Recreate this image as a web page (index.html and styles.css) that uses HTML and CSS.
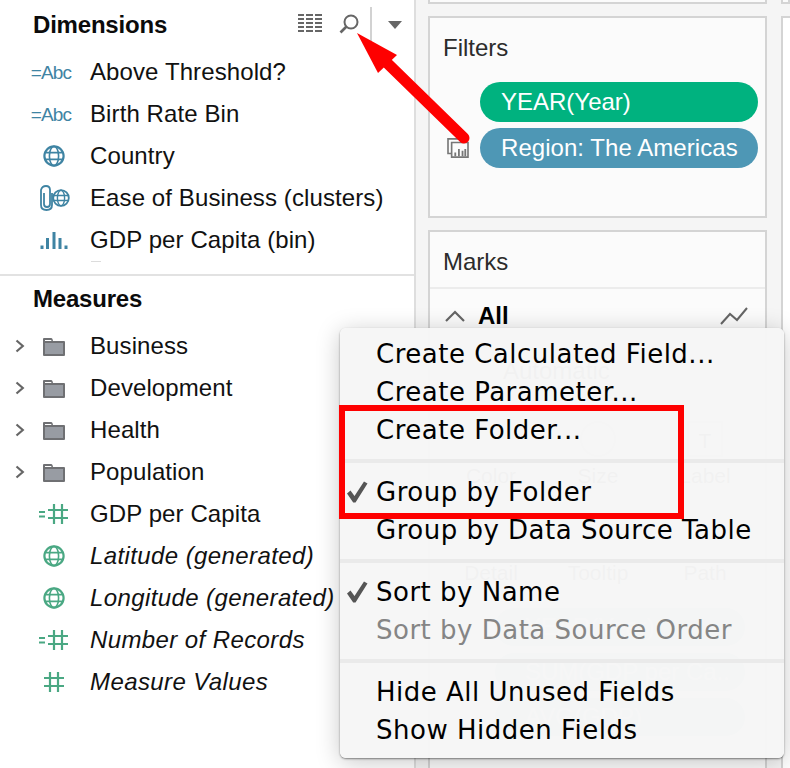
FILE: index.html
```html
<!DOCTYPE html>
<html lang="en">
<head>
<meta charset="utf-8">
<title>Data pane menu</title>
<link rel="stylesheet" href="styles.css">
</head>
<body>
<svg class="defs" width="0" height="0" aria-hidden="true">
  <defs>
    <symbol id="globe" viewBox="0 0 22 22">
      <g fill="none" stroke="currentColor">
        <circle cx="11" cy="11" r="9.6" stroke-width="2.2"/>
        <ellipse cx="11" cy="11" rx="4.6" ry="9.6" stroke-width="1.6"/>
        <path d="M1.6 7.6h18.8M1.6 14.4h18.8" stroke-width="1.6"/>
      </g>
    </symbol>
    <symbol id="hash" viewBox="0 0 20 20">
      <path d="M6 0v20M14 0v20M0 6h20M0 14h20" fill="none" stroke="currentColor" stroke-width="2.2"/>
    </symbol>
    <symbol id="eqhash" viewBox="0 0 29 20">
      <path d="M0 8h6M0 12.500h6" fill="none" stroke="currentColor" stroke-width="2"/>
      <path d="M15 0v20M23 0v20M9 6h20M9 14h20" fill="none" stroke="currentColor" stroke-width="2.200"/>
    </symbol>
    <symbol id="folder" viewBox="0 0 22 19">
      <path d="M1 19q-1 0-1-1V2q0-1 1-1h7q1 0 1.500 1L10 4h11q1 0 1 1v13q0 1-1 1z" fill="#6f7073"/>
      <path d="M2 6h18v11H2z" fill="#989ca3"/>
      <path d="M2 3h6l.6 1H2z" fill="#fff"/>
    </symbol>
    <symbol id="chev" viewBox="0 0 10 14">
      <path d="M1.500 1.500 7.800 7 1.500 12.500" fill="none" stroke="#666" stroke-width="2.200"/>
    </symbol>
    <symbol id="check" viewBox="0 0 22 22">
      <path d="M1 12.500 4.500 9.500 8.500 15 18 0.500 21.500 2.500 9.500 21.500H7.200z" fill="#555"/>
    </symbol>
  </defs>
</svg>

<div class="app">
  <aside class="data-pane">
    <section class="dims">
      <header class="pane-head">
        <h2 class="pane-title">Dimensions</h2>
        <div class="tools">
          <svg class="tool-list" width="24" height="18" viewBox="0 0 24 18" aria-hidden="true">
            <path d="M0 1h6M8 1h7M17 1h7M0 5h6M8 5h7M17 5h7M0 9h6M8 9h7M17 9h7M0 13h6M8 13h7M17 13h7M0 17h6M8 17h7M17 17h7" fill="none" stroke="#666" stroke-width="1.800"/>
          </svg>
          <svg class="tool-search" width="20" height="20" viewBox="0 0 20 20" aria-hidden="true">
            <circle cx="12" cy="8" r="6.500" fill="none" stroke="#666" stroke-width="2"/>
            <path d="M7.500 12.500 1.500 18.500" fill="none" stroke="#666" stroke-width="2.600"/>
          </svg>
          <span class="tool-sep"></span>
          <span class="tool-caret"></span>
        </div>
      </header>
      <ul class="fields">
        <li class="field"><span class="chev-slot"></span><span class="ico blue"><span class="abc">=Abc</span></span><span class="name">Above Threshold?</span></li>
        <li class="field"><span class="chev-slot"></span><span class="ico blue"><span class="abc">=Abc</span></span><span class="name">Birth Rate Bin</span></li>
        <li class="field"><span class="chev-slot"></span><span class="ico blue"><svg class="i22"><use href="#globe"/></svg></span><span class="name">Country</span></li>
        <li class="field"><span class="chev-slot"></span><span class="ico blue">
          <svg class="clip" width="31" height="26" viewBox="0 0 31 26" aria-hidden="true">
            <path d="M5 8v11q0 3 3 3t3-3V5q0-4-4-4T2 5v15q0 5 5.500 5T13 20V8" fill="none" stroke="currentColor" stroke-width="1.800"/>
            <g fill="none" stroke="currentColor">
              <circle cx="22" cy="13" r="7.800" stroke-width="1.800"/>
              <ellipse cx="22" cy="13" rx="3.600" ry="7.800" stroke-width="1.400"/>
              <path d="M14.500 10.500h15M14.500 15.500h15" stroke-width="1.400"/>
            </g>
          </svg></span><span class="name">Ease of Business (clusters)</span></li>
        <li class="field"><span class="chev-slot"></span><span class="ico blue">
          <svg width="28" height="17" viewBox="0 0 28 17" aria-hidden="true">
            <path d="M2 13.500v3.500M7.500 6v11M14 0v17M20 6v11M26 13.500v3.500" fill="none" stroke="currentColor" stroke-width="3"/>
          </svg></span><span class="name">GDP per Capita (bin)</span></li>
        <li class="field-cut"><span class="sliver"></span></li>
      </ul>
    </section>
    <section class="meas">
      <h2 class="pane-title meas-title">Measures</h2>
      <ul class="fields">
        <li class="field"><span class="chev-slot"><svg class="chev"><use href="#chev"/></svg></span><span class="ico"><svg class="fold"><use href="#folder"/></svg></span><span class="name">Business</span></li>
        <li class="field"><span class="chev-slot"><svg class="chev"><use href="#chev"/></svg></span><span class="ico"><svg class="fold"><use href="#folder"/></svg></span><span class="name">Development</span></li>
        <li class="field"><span class="chev-slot"><svg class="chev"><use href="#chev"/></svg></span><span class="ico"><svg class="fold"><use href="#folder"/></svg></span><span class="name">Health</span></li>
        <li class="field"><span class="chev-slot"><svg class="chev"><use href="#chev"/></svg></span><span class="ico"><svg class="fold"><use href="#folder"/></svg></span><span class="name">Population</span></li>
        <li class="field"><span class="chev-slot"></span><span class="ico green"><svg class="i-eq"><use href="#eqhash"/></svg></span><span class="name">GDP per Capita</span></li>
        <li class="field"><span class="chev-slot"></span><span class="ico green"><svg class="i22"><use href="#globe"/></svg></span><span class="name em">Latitude (generated)</span></li>
        <li class="field"><span class="chev-slot"></span><span class="ico green"><svg class="i22"><use href="#globe"/></svg></span><span class="name em">Longitude (generated)</span></li>
        <li class="field"><span class="chev-slot"></span><span class="ico green"><svg class="i-eq"><use href="#eqhash"/></svg></span><span class="name em">Number of Records</span></li>
        <li class="field"><span class="chev-slot"></span><span class="ico green"><svg class="i-hash"><use href="#hash"/></svg></span><span class="name em">Measure Values</span></li>
      </ul>
    </section>
  </aside>

  <main class="shelves">
    <div class="card stub"></div>
    <section class="card filters">
      <h3 class="card-title">Filters</h3>
      <div class="pills">
        <div class="pill-row"><span class="pill pill-green">YEAR(Year)</span></div>
        <div class="pill-row">
          <svg class="ctx" width="24" height="22" viewBox="0 0 24 22" aria-hidden="true">
            <path d="M5 17H1V1h15v3" fill="none" stroke="#777" stroke-width="1.800"/>
            <path d="M5 5h18v16H5z" fill="none" stroke="#777" stroke-width="1.800"/>
            <path d="M9 20v-4M13 20v-8M17 20v-6M20 20v-8" fill="none" stroke="#777" stroke-width="2"/>
          </svg>
          <span class="pill pill-blue">Region: The Americas</span>
        </div>
      </div>
    </section>
    <section class="card marks">
      <h3 class="card-title marks-title">Marks</h3>
      <div class="marks-all">
        <svg width="20" height="12" viewBox="0 0 20 12" aria-hidden="true"><path d="M1 11 10 2l9 9" fill="none" stroke="#666" stroke-width="2.200"/></svg>
        <strong class="all-label">All</strong>
        <svg class="all-line" width="28" height="18" viewBox="0 0 28 18" aria-hidden="true"><path d="M1 17 10 7l7 6L27 1" fill="none" stroke="#666" stroke-width="2"/></svg>
      </div>
      <div class="mark-type"><span class="mark-type-name">Automatic</span></div>
      <div class="mark-grid">
        <div class="mark-cell"><span class="mark-glyph"></span>Color</div>
        <div class="mark-cell"><span class="mark-glyph round"></span>Size</div>
        <div class="mark-cell"><span class="mark-glyph box">T</span>Label</div>
        <div class="mark-cell"><span class="mark-glyph"></span>Detail</div>
        <div class="mark-cell"><span class="mark-glyph"></span>Tooltip</div>
        <div class="mark-cell"><span class="mark-glyph"></span>Path</div>
      </div>
      <div class="mark-pills">
        <span class="mark-pill">YEAR(Year)</span>
        <span class="mark-pill">SUM(GDP per Ca..</span>
        <span class="mark-pill">AVG(GDP)</span>
      </div>
    </section>
  </main>

  <div class="canvas">
    <div class="card stub"></div>
    <div class="card canvas-card"></div>
  </div>
</div>

<div class="menu" role="menu">
  <div class="item">Create Calculated Field...</div>
  <div class="item">Create Parameter...</div>
  <div class="item">Create Folder...</div>
  <div class="sep"></div>
  <div class="item"><svg class="tick"><use href="#check"/></svg>Group by Folder</div>
  <div class="item">Group by Data Source Table</div>
  <div class="sep"></div>
  <div class="item"><svg class="tick"><use href="#check"/></svg>Sort by Name</div>
  <div class="item off">Sort by Data Source Order</div>
  <div class="sep"></div>
  <div class="item">Hide All Unused Fields</div>
  <div class="item">Show Hidden Fields</div>
</div>

<div class="callout-box"></div>
<svg class="callout-arrow" width="790" height="768" viewBox="0 0 790 768" aria-hidden="true">
  <path d="M383 59 464 138" fill="none" stroke="#fe0000" stroke-width="11" stroke-linecap="round"/>
  <path d="M357 33 397 55 378 73z" fill="#fe0000"/>
</svg>
</body>
</html>
```
FILE: styles.css
```css
* { box-sizing: border-box; }
html, body { margin: 0; padding: 0; }
body {
  width: 790px;
  height: 768px;
  overflow: hidden;
  position: relative;
  background: #f5f5f5;
  font-family: "Liberation Sans", Arial, sans-serif;
  font-size: 24px;
  color: #111;
}
.defs { position: absolute; }
ul { list-style: none; margin: 0; padding: 0; }
h2, h3 { margin: 0; }

.app { display: flex; height: 768px; }

/* Data pane */
.data-pane {
  width: 416px;
  flex: none;
  background: #fff;
  border-right: 2px solid #dedede;
  display: flex;
  flex-direction: column;
}
.dims {
  height: 276px;
  overflow: hidden;
  border-bottom: 2px solid #e2e2e2;
  flex: none;
}
.pane-head {
  height: 51px;
  display: flex;
  align-items: center;
  padding-left: 33px;
}
.pane-title { font-size: 24px; font-weight: 700; color: #0b0b0b; letter-spacing: -0.2px; line-height: 28px; margin-top: -2px; }
.tools { margin-left: 131px; display: flex; align-items: center; height: 40px; margin-top: 2px; }
.tool-list { margin-right: 17px; margin-top: -8px; }
.tool-search { margin-right: 11px; margin-top: -6px; }
.tool-sep { width: 2px; height: 40px; background: #d2d2d2; margin-right: 16px; }
.tool-caret {
  width: 0; height: 0;
  margin-top: -4px;
  border-left: 7px solid transparent;
  border-right: 7px solid transparent;
  border-top: 8px solid #666;
}
.field {
  height: 42px;
  display: grid;
  grid-template-columns: 32px 44px auto;
  align-items: center;
}
.chev-slot { display: flex; justify-content: flex-end; padding-right: 7px; }
.chev { width: 10px; height: 14px; }
.ico { display: flex; justify-content: center; align-items: center; height: 28px; }
.blue { color: #3f84a3; }
.green { color: #4aa883; }
.name { padding-left: 14px; white-space: nowrap; line-height: 28px; letter-spacing: 0.1px; }
.em { letter-spacing: 0.4px; font-style: italic; }
.abc { font-size: 19px; margin-left: -6px; margin-top: 2px; letter-spacing: -0.8px; white-space: nowrap; }
.i22 { width: 22px; height: 22px; }
.i-eq { width: 29px; height: 20px; margin-left: -1px; }
.i-hash { width: 20px; height: 20px; }
.fold { width: 22px; height: 19px; }
.field-cut { height: 8px; padding: 0 0 0 91px; }
.sliver { display: block; width: 10px; height: 1px; background: #dcdcdc; margin-top: 0; }

.meas { flex: 1; }
.meas-title { padding: 9px 0 0 33px; height: 49px; margin-top: 0; line-height: 27px; }

/* Shelves */
.shelves {
  width: 339px;
  margin-left: 12px;
  flex: none;
  display: flex;
  flex-direction: column;
}
.card { background: #fbfbfb; border: 2px solid #d4d4d4; }
.stub { height: 4px; border-top: 0; margin-bottom: 12px; flex: none; }
.filters { height: 202px; flex: none; margin-bottom: 12px; }
.card-title { font-weight: 400; font-size: 24px; color: #2c2c2c; padding: 16px 0 0 13px; line-height: 28px; height: 62px; }
.pills { display: flex; flex-direction: column; gap: 6px; padding-left: 50px; padding-right: 7px; margin-top: 2px; }
.pill-row { position: relative; }
.pill {
  display: block;
  height: 40px;
  line-height: 39px;
  border-radius: 20px;
  color: #fff;
  padding-left: 21px;
  white-space: nowrap;
}
.pill-green { background: #00b27f; }
.pill-blue { background: #4e97b5; letter-spacing: 0.05px; }
.ctx { position: absolute; left: -33px; top: 10px; width: 22px; height: 20px; }

.marks { flex: 1; min-height: 0; margin-bottom: -2px; border-bottom: 0; }
.marks-title { height: 57px; padding-top: 16px; border-bottom: 2px solid #ececec; }
.marks-all { display: flex; align-items: center; height: 50px; padding: 3px 0 0 15px; }
.all-label { margin-left: 13px; font-size: 24px; color: #000; }
.all-line { margin-left: auto; margin-right: 17px; }
.mark-type { height: 61px; border-bottom: 1px solid #ddd; padding: 12px 0 0 73px; color: #333; line-height: 40px; }
.mark-grid {
  display: grid;
  grid-template-columns: repeat(3, 107px);
  grid-auto-rows: 97px;
  margin: 0 0 0 8px;
  font-size: 21px;
  color: #333;
}
.mark-cell {
  display: flex;
  flex-direction: column;
  align-items: center;
  justify-content: flex-end;
  padding-bottom: 8px;
  border-right: 1px solid #e2e2e2;
  border-bottom: 1px solid #e8e8e8;
}
.mark-glyph { width: 36px; height: 36px; margin-bottom: 7px; display: block; text-align: center; line-height: 36px; }
.round { border: 2px solid #bbb; border-radius: 50%; }
.box { border: 2px solid #bbb; }
.mark-pills { display: flex; flex-direction: column; gap: 7px; padding: 14px 0 0 65px; }
.mark-pill { width: 250px; height: 38px; border-radius: 19px; background: #9db7c9; color: #fff; padding-left: 30px; line-height: 38px; }

/* Right edge */
.canvas { flex: 1; min-width: 0; margin-left: 14px; display: flex; flex-direction: column; }
.canvas-card { flex: 1; background: #fff; border-right: 0; margin-bottom: -4px; }

/* Overlays */
.menu {
  position: absolute;
  left: 340px;
  top: 328px;
  width: 444px;
  height: 430px;
  padding: 7px 0 9px;
  background: rgba(246, 246, 246, 0.975);
  border-radius: 6px;
  box-shadow: 0 1px 2px rgba(0, 0, 0, 0.45), 0 4px 24px rgba(0, 0, 0, 0.22);
  font-family: "DejaVu Sans", sans-serif;
  font-size: 26px;
  letter-spacing: 0.5px;
  color: #000;
}
.item {
  position: relative;
  height: 38px;
  line-height: 39px;
  padding-left: 36px;
  white-space: nowrap;
}
.off { color: #858585; }
.sep { height: 24px; display: flex; align-items: center; }
.sep::before { content: ""; display: block; width: 100%; height: 4px; background: #eaeaea; }
.tick { position: absolute; left: 6px; top: 8px; width: 22px; height: 22px; }

.callout-box {
  position: absolute;
  left: 339px;
  top: 405px;
  width: 345px;
  height: 114px;
  border: 6px solid #fe0000;
}
.callout-arrow { position: absolute; left: 0; top: 0; pointer-events: none; }
```
